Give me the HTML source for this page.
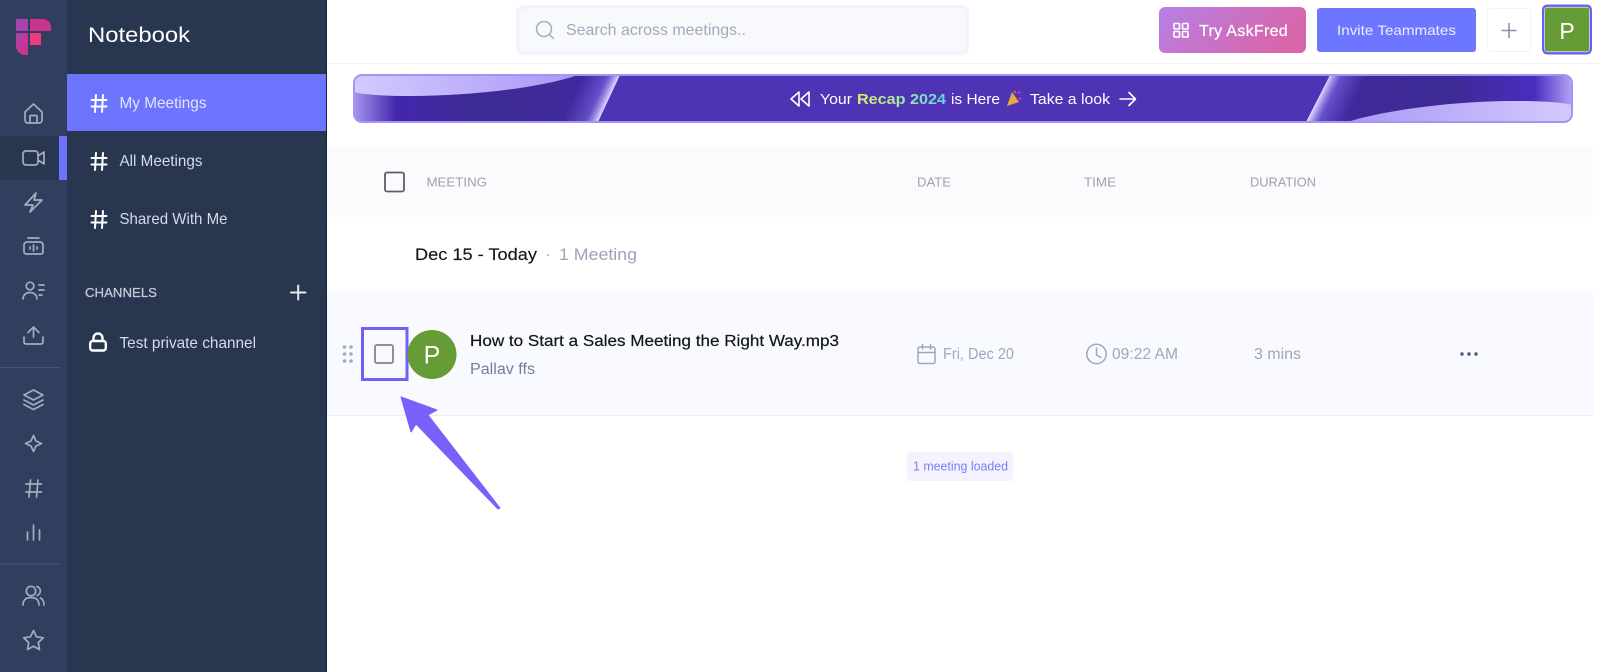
<!DOCTYPE html>
<html lang="en">
<head>
<meta charset="utf-8">
<title>Notebook</title>
<style>
html,body{margin:0;padding:0;width:1600px;height:672px;overflow:hidden;background:#fff}
svg{display:block}
text{font-family:"Liberation Sans",sans-serif}
.ri{fill:none;stroke:#a5acbc;stroke-width:1.7;stroke-linecap:round;stroke-linejoin:round}
.h{fill:none;stroke:#fff;stroke-width:2;stroke-linecap:round}
.th{font-size:12.5px;fill:#9aa1b3}
.mut{font-size:15.5px;fill:#a0a7ba}
.ic{fill:none;stroke:#9ea6b9;stroke-width:1.5;stroke-linecap:round;stroke-linejoin:round}
</style>
</head>
<body>
<svg width="1600" height="672" viewBox="0 0 1600 672" xmlns="http://www.w3.org/2000/svg">
<defs>
<linearGradient id="ask" x1="0" y1="0" x2="1" y2="0.3"><stop offset="0" stop-color="#b680e6"/><stop offset="1" stop-color="#d866aa"/></linearGradient>
<linearGradient id="deco" gradientUnits="userSpaceOnUse" x1="354" y1="0" x2="620" y2="0"><stop offset="0" stop-color="#a594f0"/><stop offset=".16" stop-color="#4326ad"/><stop offset=".45" stop-color="#3e2a94"/><stop offset=".75" stop-color="#3f2a98"/><stop offset="1" stop-color="#4326ad"/></linearGradient>
<linearGradient id="decoR" gradientUnits="userSpaceOnUse" x1="1572" y1="0" x2="1306" y2="0"><stop offset="0" stop-color="#b3a3f5"/><stop offset=".14" stop-color="#4a2cc0"/><stop offset=".45" stop-color="#3e2a94"/><stop offset=".75" stop-color="#3f2a98"/><stop offset="1" stop-color="#4326ad"/></linearGradient>
<linearGradient id="edgeL" gradientUnits="userSpaceOnUse" x1="579" y1="84.500" x2="609" y2="98.500"><stop offset="0" stop-color="#8f7cf0" stop-opacity="0"/><stop offset=".65" stop-color="#8f7cf0" stop-opacity=".45"/><stop offset="1" stop-color="#e2dcfe"/></linearGradient>
<linearGradient id="edgeR" gradientUnits="userSpaceOnUse" x1="1348" y1="113" x2="1318" y2="98.500"><stop offset="0" stop-color="#8f7cf0" stop-opacity="0"/><stop offset=".65" stop-color="#8f7cf0" stop-opacity=".45"/><stop offset="1" stop-color="#e2dcfe"/></linearGradient>
<linearGradient id="sw" x1="0" y1="0" x2="1" y2="0"><stop offset="0" stop-color="#d3c9fd"/><stop offset="1" stop-color="#ab98f6"/></linearGradient>
<linearGradient id="swR" x1="1" y1="0" x2="0" y2="0"><stop offset="0" stop-color="#d3c9fd"/><stop offset="1" stop-color="#ab98f6"/></linearGradient>
<linearGradient id="recap" x1="0" y1="0" x2="1" y2="0"><stop offset="0" stop-color="#d5ee6a"/><stop offset=".55" stop-color="#9ce5a0"/><stop offset="1" stop-color="#5fd4e6"/></linearGradient>
<linearGradient id="lg1" x1="0" y1="0" x2="1" y2="1"><stop offset="0" stop-color="#a844ac"/><stop offset="1" stop-color="#d02f84"/></linearGradient>
<clipPath id="bn"><rect x="354" y="75" width="1218" height="47" rx="8"/></clipPath>
</defs>

<!-- rail + panel -->
<rect x="0" y="0" width="67" height="672" fill="#303f5e"/>
<rect x="67" y="0" width="259" height="672" fill="#29364f"/>
<rect x="326" y="0" width="1" height="672" fill="#15213f"/>

<!-- logo -->
<path d="M16 19h12v12H16z" fill="#a844ac"/>
<path d="M30 19h13a8 8 0 0 1 8 8v4H30z" fill="#c8358a"/>
<path d="M16 33h12v22h-3a9 9 0 0 1-9-9z" fill="url(#lg1)"/>
<rect x="30" y="33" width="11" height="12" fill="#ee3b80"/>

<!-- rail selection -->
<rect x="0" y="136" width="59" height="44" fill="#28364f"/>
<rect x="59" y="136" width="8" height="44" fill="#6d75ff"/>

<!-- rail icons -->
<path class="ri" d="M25 112L33.500 104L42 112V120a3 3 0 0 1-3 3H28a3 3 0 0 1-3-3ZM30 123V116.500a1 1 0 0 1 1-1h5a1 1 0 0 1 1 1V123"/>
<path class="ri" d="M26 151h9a3 3 0 0 1 3 3v8a3 3 0 0 1-3 3h-9a3 3 0 0 1-3-3v-8a3 3 0 0 1 3-3ZM38 156L44 152V164L38 160"/>
<path class="ri" d="M36 193L25 205H33L30 212L42 200H34Z"/>
<path class="ri" d="M28 238H39M27 242h13a3 3 0 0 1 3 3v7a2 2 0 0 1-2 2H26a2 2 0 0 1-2-2v-7a3 3 0 0 1 3-3ZM33.500 245v6M30 247v2M37 247v2"/>
<circle class="ri" cx="30" cy="286" r="3.800"/>
<path class="ri" d="M23 299c0-4 3-6.500 7-6.500s7 2.500 7 6.500M39 285h5M39 290h5M39 295h3"/>
<path class="ri" d="M24 337v5a2 2 0 0 0 2 2h15a2 2 0 0 0 2-2v-5M33.500 337V327.500M28 332.500l5.500-5.500 5.500 5.500"/>
<rect x="0" y="367" width="60" height="1" fill="#45536f"/>
<path class="ri" d="M33.500 390L43 395L33.500 400L24 395ZM24 400l9.500 5 9.500-5M24 404.500l9.500 5 9.500-5"/>
<path class="ri" d="M33.500 435.500L36 441L41.500 443.500L36 446L33.500 451.500L31 446L25.500 443.500L31 441Z"/>
<path class="ri" d="M26 484H41.500M26 492H41.500M30.500 480L29 497M38 480L36.500 497"/>
<path class="ri" d="M27.500 532V540M33.500 525V540M39.500 530V540"/>
<rect x="0" y="563.500" width="60" height="1" fill="#45536f"/>
<circle class="ri" cx="31" cy="591" r="4.700"/>
<path class="ri" d="M23 605c0-5 3-7.500 8-7.500s8 2.500 8 7.500M37 586.500a4.700 4.700 0 0 1 0 9M40.500 598c2 1 3.500 3 3.500 7"/>
<path class="ri" d="M33.500 630.500l3 6.300 6.800 1-5 4.800 1.200 6.900-6-3.300-6 3.300 1.200-6.900-5-4.800 6.800-1Z"/>

<!-- panel -->
<text x="88" y="42" font-size="21.500" fill="#fff" textLength="102" lengthAdjust="spacingAndGlyphs">Notebook</text>
<rect x="67" y="74" width="259" height="57" fill="#6d75ff"/>

<path class="h" d="M91.500 100H106.500M91.500 106.500H106.500M96 95L95 112M103 95L102 112"/>
<text x="119.500" y="108" font-size="16" fill="#e2e5ff" textLength="87" lengthAdjust="spacingAndGlyphs">My Meetings</text>
<path class="h" d="M91.500 158H106.500M91.500 164.500H106.500M96 153L95 170M103 153L102 170"/>
<text x="119.500" y="166" font-size="16" fill="#d5dbe8" textLength="83" lengthAdjust="spacingAndGlyphs">All Meetings</text>
<path class="h" d="M91.500 216H106.500M91.500 222.500H106.500M96 211L95 228M103 211L102 228"/>
<text x="119.500" y="224" font-size="16" fill="#d5dbe8" textLength="108" lengthAdjust="spacingAndGlyphs">Shared With Me</text>

<text x="85" y="297" font-size="12.500" fill="#c4cad8" stroke="#c4cad8" stroke-width=".25" textLength="72" lengthAdjust="spacingAndGlyphs">CHANNELS</text>
<path d="M291 292.500H305.500M298.200 285.500V299.500" stroke="#e6e9f0" stroke-width="2" stroke-linecap="round" fill="none"/>
<path d="M93.500 340.500v-2.500a4.500 4.500 0 0 1 9 0v2.500" fill="none" stroke="#fff" stroke-width="2.400"/>
<rect x="90.200" y="341" width="15.600" height="9.500" rx="2.500" fill="none" stroke="#fff" stroke-width="2.400"/>
<text x="119.500" y="348" font-size="16" fill="#d5dbe8" textLength="136.500" lengthAdjust="spacingAndGlyphs">Test private channel</text>

<!-- top bar -->
<rect x="327" y="63" width="1273" height="1" fill="#f0f0f3"/>
<rect x="518" y="7" width="449" height="46" rx="6" fill="#f8f9fd" stroke="#f3f3fd" stroke-width="4"/>
<circle cx="544" cy="29" r="7.500" fill="none" stroke="#a6adbd" stroke-width="1.500"/>
<path d="M549.500 34.500L553.500 38.500" stroke="#a6adbd" stroke-width="1.500" stroke-linecap="round"/>
<text x="566" y="35" font-size="16" fill="#a3a9bb" textLength="180" lengthAdjust="spacingAndGlyphs">Search across meetings..</text>

<rect x="1159" y="7" width="147" height="46" rx="6" fill="url(#ask)"/>
<g fill="none" stroke="#fff" stroke-width="1.600">
<rect x="1174" y="23.500" width="5.500" height="5.500" rx=".8"/><rect x="1182.500" y="23.500" width="5.500" height="5.500" rx=".8"/>
<rect x="1174" y="31.500" width="5.500" height="5.500" rx=".8"/><rect x="1182.500" y="31.500" width="5.500" height="5.500" rx=".8"/>
</g>
<text x="1199" y="36" font-size="16" fill="#fff" stroke="#fff" stroke-width=".2" letter-spacing=".3" textLength="89" lengthAdjust="spacingAndGlyphs">Try AskFred</text>
<rect x="1317" y="8" width="159" height="44" rx="3" fill="#6d76ff"/>
<text x="1337" y="35" font-size="14" fill="#eceeff" textLength="119" lengthAdjust="spacingAndGlyphs">Invite Teammates</text>
<rect x="1487.500" y="8.500" width="43" height="43" rx="3" fill="#fff" stroke="#f2f3f6"/>
<path d="M1501.500 30.500H1516.500M1509 23V38" stroke="#8a93a6" stroke-width="1.600" fill="none"/>
<rect x="1543.200" y="5.700" width="47.600" height="47.600" rx="4" fill="#fff" stroke="#6d5cf0" stroke-width="2.400"/>
<rect x="1545" y="7.500" width="44" height="44" rx="2" fill="#669c35"/>
<text x="1567" y="39" font-size="23" fill="#fff" text-anchor="middle">P</text>

<!-- banner -->
<rect x="354" y="75" width="1218" height="47" rx="8" fill="#4e33b5"/>
<g clip-path="url(#bn)">
<path d="M354 75H620L598 122H354Z" fill="url(#deco)"/>
<path d="M570 75H620L598 122H548Z" fill="url(#edgeL)"/>
<path d="M354 75H578C540 88 470 96 410 96C385 96 365 95 354 92Z" fill="url(#sw)"/>
<path d="M1572 75H1330L1306 122H1572Z" fill="url(#decoR)"/>
<path d="M1330 75H1380L1356 122H1306Z" fill="url(#edgeR)"/>
<path d="M1572 122H1347C1385 110 1455 101 1515 101C1540 101 1560 102 1572 105Z" fill="url(#swR)"/>
</g>
<rect x="354" y="75" width="1218" height="47" rx="8" fill="none" stroke="#a593f5" stroke-width="2"/>
<path d="M799 92L791 99L799 106ZM809 92L801 99L809 106Z" fill="none" stroke="#fff" stroke-width="1.600" stroke-linejoin="round"/>
<text x="820" y="104" font-size="15" fill="#fff" textLength="32" lengthAdjust="spacingAndGlyphs">Your</text>
<text x="857" y="104" font-size="15" font-weight="bold" fill="url(#recap)" textLength="89" lengthAdjust="spacingAndGlyphs">Recap 2024</text>
<text x="951" y="104" font-size="15" fill="#fff" textLength="49" lengthAdjust="spacingAndGlyphs">is Here</text>
<path d="M1007 106L1012 92L1019 102Z" fill="#e8a93a"/>
<path d="M1014 91l2 2M1018 93l2-1M1019 98l2 1" stroke="#e65aa8" stroke-width="1.500" fill="none"/>
<text x="1030" y="104" font-size="15" fill="#fff" textLength="80" lengthAdjust="spacingAndGlyphs">Take a look</text>
<path d="M1120 99H1135M1129 92.500L1135.500 99L1129 105.500" fill="none" stroke="#fff" stroke-width="1.600" stroke-linecap="round" stroke-linejoin="round"/>

<!-- table header -->
<rect x="327" y="146" width="1266" height="71" fill="#fbfbfd"/>
<rect x="385" y="172.500" width="19" height="19" rx="2" fill="none" stroke="#5c5f66" stroke-width="1.800"/>
<text class="th" x="426.500" y="186.500" textLength="60.500" lengthAdjust="spacingAndGlyphs">MEETING</text>
<text class="th" x="917" y="186.500" textLength="34" lengthAdjust="spacingAndGlyphs">DATE</text>
<text class="th" x="1084" y="186.500" textLength="32" lengthAdjust="spacingAndGlyphs">TIME</text>
<text class="th" x="1250" y="186.500" textLength="66" lengthAdjust="spacingAndGlyphs">DURATION</text>

<text x="415" y="260" font-size="17" fill="#14161c" stroke="#14161c" stroke-width=".15" textLength="122" lengthAdjust="spacingAndGlyphs">Dec 15 - Today</text>
<circle cx="548" cy="255" r="1" fill="#a6adbf"/>
<text x="559" y="260" font-size="17" fill="#9aa3b8" textLength="78" lengthAdjust="spacingAndGlyphs">1 Meeting</text>

<!-- row -->
<rect x="327" y="291" width="1266" height="124" fill="#f9faff"/>
<rect x="327" y="415" width="1266" height="1" fill="#ebedf3"/>
<g fill="#a2aabc">
<circle cx="344.500" cy="347" r="1.800"/><circle cx="351" cy="347" r="1.800"/>
<circle cx="344.500" cy="354" r="1.800"/><circle cx="351" cy="354" r="1.800"/>
<circle cx="344.500" cy="361" r="1.800"/><circle cx="351" cy="361" r="1.800"/>
</g>
<rect x="362.500" y="328.500" width="44.500" height="51" fill="none" stroke="#7360f2" stroke-width="3"/>
<rect x="375" y="345" width="18" height="18" rx="2" fill="none" stroke="#8d9097" stroke-width="2"/>
<circle cx="432" cy="354.500" r="24.500" fill="#669c35"/>
<text x="432" y="363.500" font-size="25" fill="#fff" text-anchor="middle">P</text>
<text x="470" y="346" font-size="15.500" fill="#12151d" stroke="#12151d" stroke-width=".2" textLength="369" lengthAdjust="spacingAndGlyphs">How to Start a Sales Meeting the Right Way.mp3</text>
<text x="470" y="374" font-size="15.500" fill="#737e97" textLength="65" lengthAdjust="spacingAndGlyphs">Pallav ffs</text>

<rect class="ic" x="918" y="347" width="17" height="16.500" rx="2"/>
<path class="ic" d="M918 352.500H935M922.500 344.500V349M930.500 344.500V349"/>
<text class="mut" x="943" y="359" textLength="71" lengthAdjust="spacingAndGlyphs">Fri, Dec 20</text>
<circle class="ic" cx="1096.500" cy="354" r="9.700"/>
<path class="ic" d="M1096.500 348V355L1101 357.500"/>
<text class="mut" x="1112" y="359" textLength="66" lengthAdjust="spacingAndGlyphs">09:22 AM</text>
<text class="mut" x="1254" y="359" textLength="47" lengthAdjust="spacingAndGlyphs">3 mins</text>
<g fill="#4c5474"><circle cx="1462" cy="354" r="1.700"/><circle cx="1469" cy="354" r="1.700"/><circle cx="1476" cy="354" r="1.700"/></g>

<!-- arrow -->
<path d="M401 397L437 410L428 415L500 508L498 509L416 424L411 432Z" fill="#7a5ffa" stroke="#7a5ffa" stroke-width="1" stroke-linejoin="round"/>

<!-- pill -->
<rect x="907" y="452" width="106" height="29" rx="3" fill="#f3f2fd"/>
<text x="913" y="470.500" font-size="12.500" fill="#7d80f5" textLength="95" lengthAdjust="spacingAndGlyphs">1 meeting loaded</text>
</svg>
</body>
</html>
